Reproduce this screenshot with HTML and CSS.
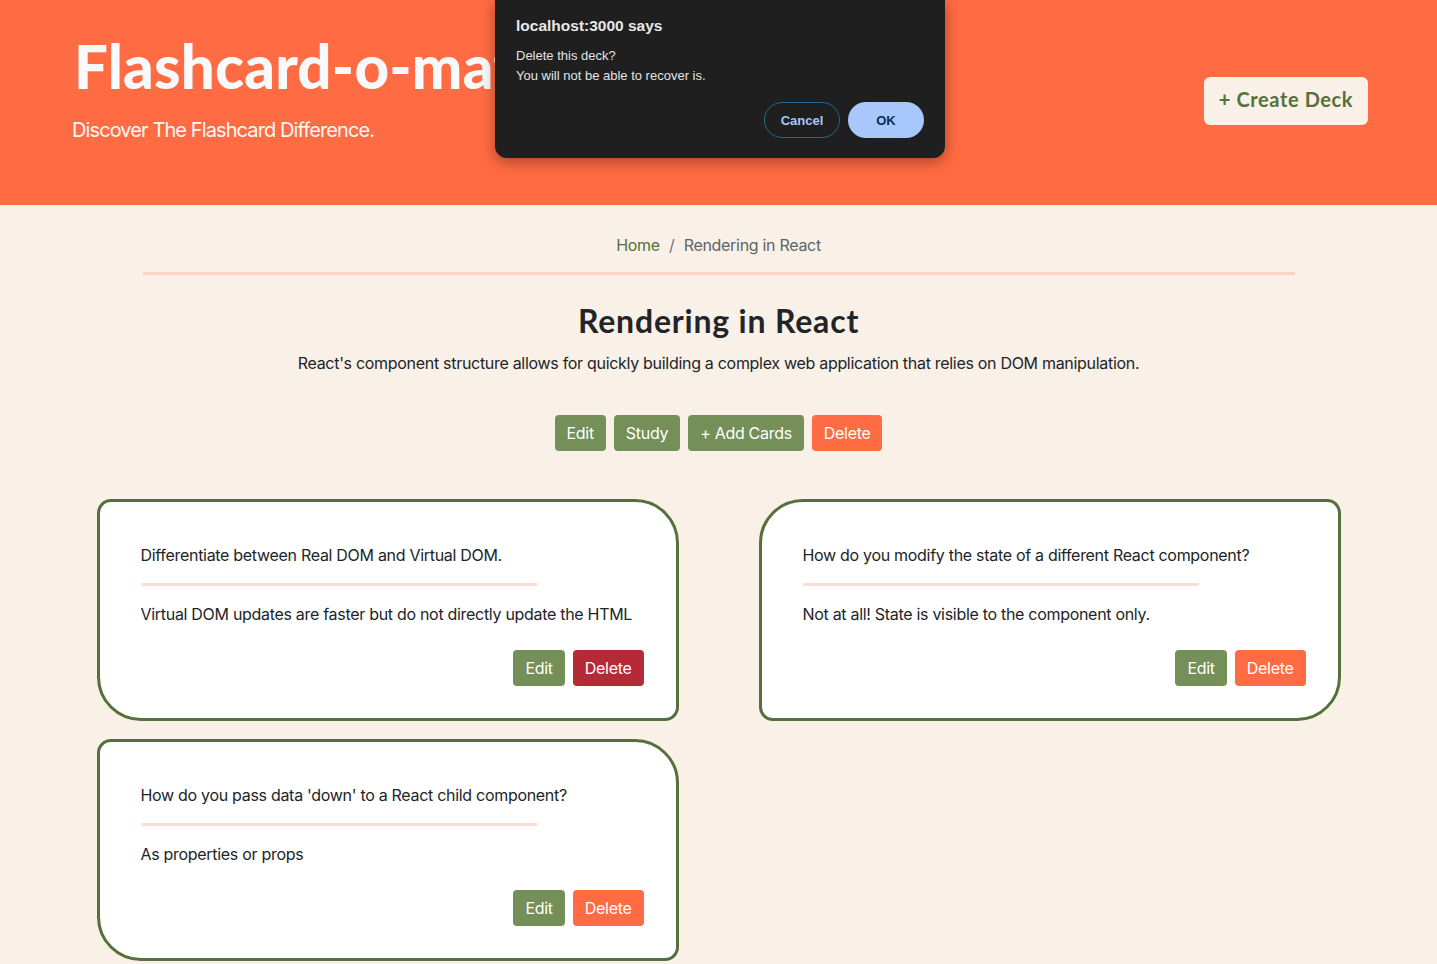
FILE: index.html
```html
<!DOCTYPE html>
<html lang="en">
<head>
<meta charset="utf-8">
<title>Flashcard-o-matic</title>
<link rel="stylesheet" href="styles.css">
</head>
<body>
<header class="hero">
  <div class="hero-text">
    <h1 class="brand">Flashcard-o-matic</h1>
    <p class="tagline">Discover The Flashcard Difference.</p>
  </div>
  <button class="create-btn">+ Create Deck</button>
</header>

<main class="page">
  <nav class="crumbs">
    <a class="crumb-link" href="#">Home</a>
    <span class="crumb-sep">/</span>
    <span class="crumb-current">Rendering in React</span>
  </nav>
  <hr class="rule">

  <section class="deck">
    <h2 class="deck-title">Rendering in React</h2>
    <p class="deck-desc">React's component structure allows for quickly building a complex web application that relies on DOM manipulation.</p>
    <div class="deck-actions">
      <button class="btn btn-green">Edit</button>
      <button class="btn btn-green">Study</button>
      <button class="btn btn-green">+ Add Cards</button>
      <button class="btn btn-orange">Delete</button>
    </div>
  </section>

  <section class="cards">
    <article class="card card-a">
      <p class="card-front">Differentiate between Real DOM and Virtual DOM.</p>
      <div class="card-rule"></div>
      <p class="card-back">Virtual DOM updates are faster but do not directly update the HTML</p>
      <div class="card-actions">
        <button class="btn btn-green">Edit</button>
        <button class="btn btn-red">Delete</button>
      </div>
    </article>
    <article class="card card-b">
      <p class="card-front">How do you modify the state of a different React component?</p>
      <div class="card-rule"></div>
      <p class="card-back">Not at all! State is visible to the component only.</p>
      <div class="card-actions">
        <button class="btn btn-green">Edit</button>
        <button class="btn btn-orange">Delete</button>
      </div>
    </article>
    <article class="card card-a">
      <p class="card-front">How do you pass data 'down' to a React child component?</p>
      <div class="card-rule"></div>
      <p class="card-back">As properties or props</p>
      <div class="card-actions">
        <button class="btn btn-green">Edit</button>
        <button class="btn btn-orange">Delete</button>
      </div>
    </article>
  </section>
</main>

<div class="dialog" role="alertdialog">
  <div class="dialog-title">localhost:3000 says</div>
  <div class="dialog-msg">Delete this deck?<br>You will not be able to recover is.</div>
  <div class="dialog-actions">
    <button class="dlg-btn dlg-cancel">Cancel</button>
    <button class="dlg-btn dlg-ok">OK</button>
  </div>
</div>
</body>
</html>
```

FILE: styles.css
```css
* { box-sizing: border-box; }

html, body {
  margin: 0;
  padding: 0;
}

body {
  background: #f9f1e7;
  font-family: Inter, "Liberation Sans", sans-serif;
  color: #212529;
  font-size: 16px;
  line-height: 1.5;
  letter-spacing: -0.3px;
  min-height: 964px;
}

.hero {
  background: #ff6b42;
  height: 205px;
  display: flex;
  align-items: flex-start;
  justify-content: space-between;
  padding: 0 69px 0 72px;
}

.hero-text {
  padding-top: 30px;
}

.brand {
  margin: 0;
  font-family: Lato, "Liberation Sans", sans-serif;
  font-weight: 900;
  font-size: 60px;
  line-height: 72px;
  color: #f8f9fa;
  padding-left: 2px;
  letter-spacing: 0.2px;
}

.tagline {
  margin: 13px 0 0;
  font-size: 20px;
  line-height: 30px;
  color: #f8f9fa;
  letter-spacing: -0.9px;
}

.create-btn {
  margin-top: 77px;
  height: 48px;
  width: 164px;
  border: 0;
  border-radius: 6px;
  background: #f9f1e7;
  color: #55703b;
  font-family: Lato, "Liberation Sans", sans-serif;
  font-weight: 700;
  font-size: 20px;
  letter-spacing: 0.6px;
  padding: 0 0 4px;
}

.page {
  padding-top: 28px;
}

.crumbs {
  text-align: center;
  font-size: 16px;
  line-height: 24px;
}

.crumb-link {
  color: #55703b;
  text-decoration: none;
}

.crumb-sep {
  color: #6c757d;
  padding: 0 5px;
}

.crumb-current {
  color: #5f6468;
}

.rule {
  width: 1152px;
  margin: 15px auto 0;
  border: 0;
  height: 3px;
  background: #fbd3c3;
}

.deck {
  text-align: center;
  padding-top: 26px;
}

.deck-title {
  margin: 0;
  font-family: Lato, "Liberation Sans", sans-serif;
  font-weight: 700;
  font-size: 32px;
  line-height: 40px;
  letter-spacing: 0.8px;
  color: #212529;
}

.deck-desc {
  margin: 10px 0 0;
  font-size: 16px;
  line-height: 24px;
}

.deck-actions {
  display: flex;
  justify-content: center;
  gap: 8px;
  margin-top: 40px;
}

.btn {
  height: 36px;
  border: 0;
  border-radius: 4px;
  padding: 0 12px;
  font-family: Inter, "Liberation Sans", sans-serif;
  font-size: 16px;
  letter-spacing: -0.3px;
  color: #fff;
  line-height: 36px;
}

.btn-green { background: #748f57; }
.btn-orange { background: #ff6b42; }
.btn-red { background: #b52a37; }

.cards {
  width: 1244px;
  margin: 48px auto 0;
  display: grid;
  grid-template-columns: 1fr 1fr;
  column-gap: 80px;
  row-gap: 18px;
}

.card {
  background: #fff;
  border: 3px solid #55703b;
  padding: 41px 32px 32px 41px;
  height: 222px;
}

.card-a { border-radius: 14px 44px 14px 44px; }
.card-b { border-radius: 44px 14px 44px 14px; }

.card-front,
.card-back {
  margin: 0;
  font-size: 16px;
  line-height: 24px;
}

.card-rule {
  width: 396px;
  height: 3px;
  background: #fcdcd4;
  margin: 16px 0 16px;
}

.card-actions {
  display: flex;
  justify-content: flex-end;
  gap: 8px;
  margin-top: 24px;
}

.dialog {
  position: absolute;
  top: 0;
  left: 495px;
  width: 450px;
  height: 158px;
  background: #1f1f1f;
  border-radius: 0 0 12px 12px;
  box-shadow: 0 4px 14px rgba(0,0,0,0.35);
  padding: 15px 21px 0;
  font-family: "Liberation Sans", Inter, sans-serif;
  letter-spacing: 0;
  color: #e3e3e3;
}

.dialog-title {
  font-size: 15.5px;
  font-weight: 700;
  line-height: 22px;
  color: #e8e8e8;
}

.dialog-msg {
  margin-top: 9px;
  font-size: 13px;
  line-height: 20px;
  color: #e3e3e3;
}

.dialog-actions {
  display: flex;
  justify-content: flex-end;
  gap: 8px;
  margin-top: 16px;
}

.dlg-btn {
  height: 36px;
  width: 76px;
  border-radius: 18px;
  font-family: "Liberation Sans", Inter, sans-serif;
  font-size: 13px;
  font-weight: 700;
  padding: 0;
}

.dlg-cancel {
  background: transparent;
  border: 1px solid #1e6a93;
  color: #a8c7fa;
}

.dlg-ok {
  background: #a8c7fa;
  border: 0;
  color: #0b2d57;
}
```
